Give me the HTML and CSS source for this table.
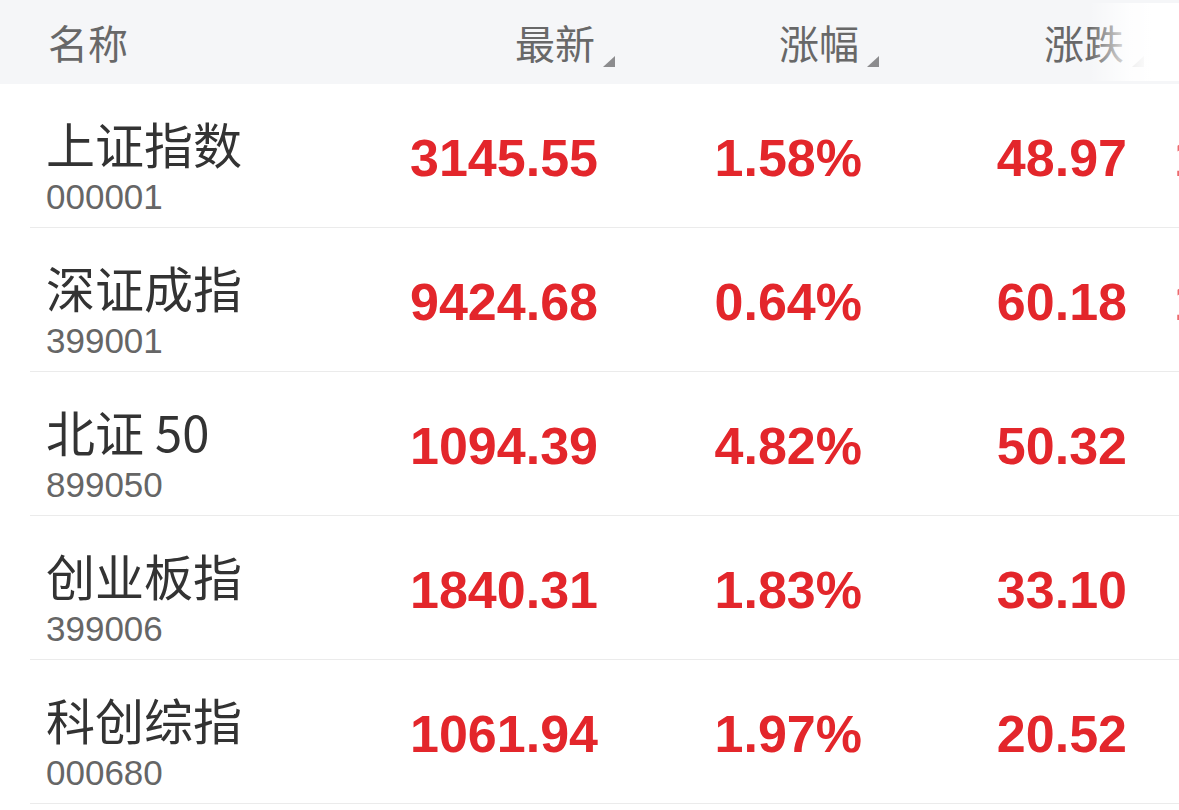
FILE: index.html
```html
<!DOCTYPE html>
<html lang="zh-CN">
<head>
<meta charset="utf-8">
<title>指数行情</title>
<link rel="stylesheet" href="styles.css">
</head>
<body>
<div class="board">
  <div class="head">
    <div class="hcell c-name">名称</div>
    <div class="hcell c-num sort">最新</div>
    <div class="hcell c-pct sort">涨幅</div>
    <div class="hcell c-chg sort">涨跌</div>
    <div class="head-fade"></div>
  </div>
  <div class="row">
    <div class="c-name"><div class="nm">上证指数</div><div class="code">000001</div></div>
    <div class="c-num val">3145.55</div>
    <div class="c-pct val">1.58%</div>
    <div class="c-chg val">48.97</div>
    <div class="c-more val">1</div>
  </div>
  <div class="row">
    <div class="c-name"><div class="nm">深证成指</div><div class="code">399001</div></div>
    <div class="c-num val">9424.68</div>
    <div class="c-pct val">0.64%</div>
    <div class="c-chg val">60.18</div>
    <div class="c-more val">1</div>
  </div>
  <div class="row">
    <div class="c-name"><div class="nm">北证 50</div><div class="code">899050</div></div>
    <div class="c-num val">1094.39</div>
    <div class="c-pct val">4.82%</div>
    <div class="c-chg val">50.32</div>
    <div class="c-more val"></div>
  </div>
  <div class="row">
    <div class="c-name"><div class="nm">创业板指</div><div class="code">399006</div></div>
    <div class="c-num val">1840.31</div>
    <div class="c-pct val">1.83%</div>
    <div class="c-chg val">33.10</div>
    <div class="c-more val"></div>
  </div>
  <div class="row">
    <div class="c-name"><div class="nm">科创综指</div><div class="code">000680</div></div>
    <div class="c-num val">1061.94</div>
    <div class="c-pct val">1.97%</div>
    <div class="c-chg val">20.52</div>
    <div class="c-more val"></div>
  </div>
</div>
</body>
</html>
```

FILE: styles.css
```css
html, body {
  margin: 0;
  padding: 0;
  background: #ffffff;
  overflow: hidden;
}
body {
  width: 1179px;
  height: 810px;
  font-family: "Liberation Sans", "Noto Sans CJK SC", sans-serif;
}
.board {
  width: 1179px;
  overflow: hidden;
}
.head {
  position: relative;
  display: flex;
  height: 84px;
  background: #f5f6f8;
  align-items: center;
}
.hcell {
  font-family: "Noto Sans CJK SC", sans-serif;
  font-size: 40px;
  color: #686868;
  position: relative;
  height: 84px;
  line-height: 84px;
  box-sizing: border-box;
  flex: none;
}
.head .c-name {
  width: 360px;
  padding-left: 48px;
}
.head .c-num, .head .c-pct, .head .c-chg {
  text-align: right;
  padding-right: 3px;
}
.sort::after {
  content: "";
  position: absolute;
  right: -17px;
  top: 56px;
  width: 0;
  height: 0;
  border-style: solid;
  border-width: 0 0 11px 12px;
  border-color: transparent transparent #8c8c8e transparent;
}
.head-fade {
  position: absolute;
  top: 3px;
  right: 0;
  width: 90px;
  height: 78px;
  background: linear-gradient(to right, rgba(255,255,255,0) 0%, rgba(255,255,255,0.85) 45%, #ffffff 70%);
}
.c-num { width: 238px; }
.c-pct { width: 264px; }
.c-chg { width: 265px; }
.c-more { width: 200px; text-align: left; padding-left: 47px; box-sizing: border-box; }

.row {
  display: flex;
  align-items: center;
  height: 143px;
  margin-left: 30px;
  border-bottom: 1px solid #ebebeb;
  width: 1400px;
}
.row > div { flex: none; }
.row .c-name {
  width: 330px;
  padding-left: 16px;
  box-sizing: border-box;
  display: flex;
  flex-direction: column;
  padding-top: 18px;
}
.nm {
  font-family: "Noto Sans CJK SC", sans-serif;
  font-size: 49px;
  line-height: 60px;
  color: #333333;
}
.code {
  font-size: 35px;
  line-height: 40px;
  margin-top: 4px;
  color: #666666;
}
.val {
  font-size: 52px;
  font-weight: bold;
  color: #e3262b;
  text-align: right;
  padding-top: 4px;
}
.row .c-more { text-align: left; color: #ec6a6d; }
```
